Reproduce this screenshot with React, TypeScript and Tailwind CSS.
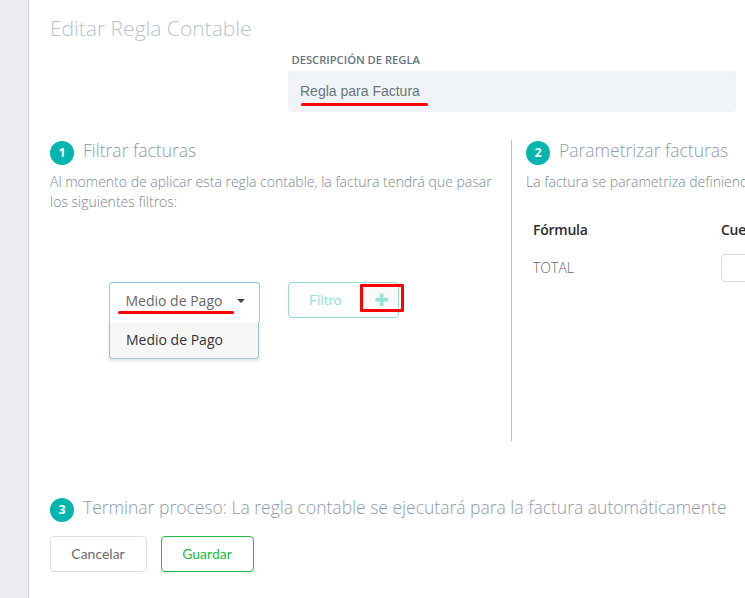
import type { ReactNode } from "react";

function StepHeading({ step, children }: { step: number; children: ReactNode }) {
  return (
    <div className="flex h-6 items-center gap-[9px]">
      <span className="flex size-6 shrink-0 items-center justify-center rounded-full bg-[#00b5ad] text-[12.5px] leading-none font-bold text-white">
        {step}
      </span>
      <h2 className="-mt-1.5 text-[17.5px] leading-6 font-light whitespace-nowrap text-[#8c9bab]">{children}</h2>
    </div>
  );
}

function FilterDropdown() {
  return (
    <div className="mt-[70px] ml-[59px] w-[151px] text-sm">
      <div className="relative flex h-10 items-center rounded-t border border-b-0 border-[#96c8da] bg-white pr-[14px] pl-[15.5px]">
        <span className="-mt-1 text-[#666]">Medio de Pago</span>
        <span className="-mt-[3px] ml-auto border-x-4 border-t-4 border-x-transparent border-t-[#444]" />
        <span className="absolute top-[28px] left-[8px] h-[3px] w-[116px] rounded-full bg-[#ff0000]" />
      </div>
      <div className="flex h-[37px] w-[150px] items-center rounded-b border border-t-0 border-[#96c8da] bg-[#f6f6f6] pl-4 text-[#333] shadow-[0_2px_3px_0_rgba(34,36,38,0.15)]">
        Medio de Pago
      </div>
    </div>
  );
}

function AddFilterButton() {
  return (
    <button className="relative mt-[70px] ml-[28px] flex h-9 w-[111px] items-center rounded border border-[#8fdcd8] pl-[20px] text-sm text-[#99e1de] font-['Lato',sans-serif]">
      Filtro
      <span className="absolute top-px right-[-6px] flex h-[28px] w-[44px] items-center justify-center rounded-[1px] border-3 border-[#ff0000]">
        <span className="absolute inset-y-0 left-0 -z-10 w-[35px] bg-[#f9f9f9]" />
        <svg viewBox="0 0 13 13" className="mt-0.5 -ml-px size-[13px]" fill="#99e1de" aria-hidden="true">
          <path d="M5 .5h3.5V5H13v3.5H8.5V13H5V8.5H.5V5H5z" />
        </svg>
      </span>
    </button>
  );
}

export default function App() {
  return (
    <div className="flex h-[598px] w-[745px] overflow-hidden bg-white text-sm font-['Open_Sans',sans-serif]">
      <aside className="w-[29px] shrink-0 border-r border-[#d0d0d3] bg-[#ebebf0]" />
      <main className="flex min-w-0 grow flex-col pl-[21px]">
        <h1 className="mt-[14px] h-7 text-[21px] leading-7 font-light text-[#b7c2ce]">Editar Regla Contable</h1>
        <div className="mt-[10px] ml-[238px] w-[448px]">
          <label className="block h-[19px] pl-[3.5px] text-[11.2px] leading-[16px] font-semibold text-[#65737f]">
            DESCRIPCIÓN DE REGLA
          </label>
          <div className="relative flex h-[41px] items-center rounded bg-[#f0f4f7] pb-0.5 pl-3 text-sm text-[#66747f] font-['Liberation_Sans',Arial,sans-serif]">
            Regla para Factura
            <span className="absolute top-[32px] left-[13px] h-[3px] w-[127px] rounded-full bg-[#ff0000]" />
          </div>
        </div>
        <div className="mt-7 flex h-[301px] shrink-0">
          <section className="w-[462px] shrink-0 border-r border-[#b5bfc9] pt-px">
            <StepHeading step={1}>Filtrar facturas</StepHeading>
            <p className="mt-[7px] text-sm leading-5 font-light whitespace-nowrap text-[#7b8794]">
              Al momento de aplicar esta regla contable, la factura tendrá que pasar
              <br />
              los siguientes filtros:
            </p>
            <div className="isolate flex">
              <FilterDropdown />
              <AddFilterButton />
            </div>
          </section>
          <section className="w-[300px] shrink-0 pt-px pl-[14px]">
            <StepHeading step={2}>Parametrizar facturas</StepHeading>
            <p className="mt-[7px] text-sm leading-5 font-light whitespace-nowrap text-[#7b8794]">
              La factura se parametriza definiendo las cuentas
            </p>
            <div className="mt-7 ml-[7px] grid grid-cols-[188px_100px] text-sm leading-5">
              <span className="font-semibold tracking-[-0.25px] text-[#2b2b2b]">Fórmula</span>
              <span className="font-semibold tracking-[-0.25px] text-[#2b2b2b]">Cuenta</span>
              <span className="mt-[18px] font-light text-[#666]">TOTAL</span>
              <span className="mt-[14px] h-7 rounded border border-[#dedede]" />
            </div>
          </section>
        </div>
        <div className="mt-[57px]">
          <StepHeading step={3}>Terminar proceso: La regla contable se ejecutará para la factura automáticamente</StepHeading>
        </div>
        <div className="mt-[14px] flex gap-[14px] text-sm font-['Lato',sans-serif]">
          <button className="h-9 w-[97px] rounded border border-[#dededf] pr-px text-[#6b6b6b]">Cancelar</button>
          <button className="h-9 w-[93px] rounded border border-[#21ba45] pr-px text-[#21ba45]">Guardar</button>
        </div>
      </main>
    </div>
  );
}
